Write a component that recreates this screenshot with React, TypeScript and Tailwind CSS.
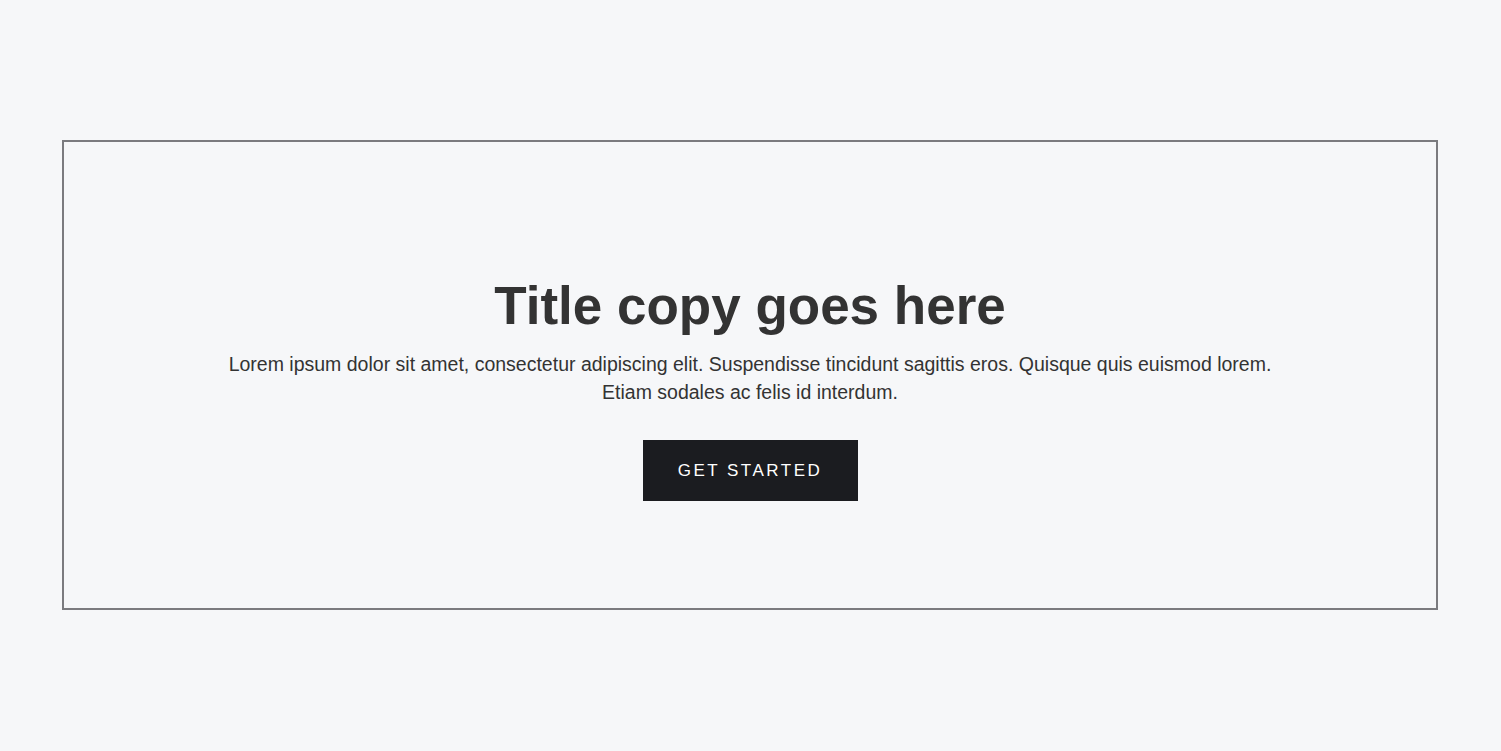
export default function App() {
  return (
    <div
      className="min-h-screen bg-[#f6f7f9] py-[140px] pl-[62px] pr-[63px]"
      style={{ fontFamily: '"Liberation Sans", Arial, sans-serif' }}
    >
      <section className="flex h-[470px] flex-col items-center border-2 border-[#7b7b7f] pt-[130px] text-center text-[#333333]">
        <h1 className="text-[53px] font-bold leading-[67px]">Title copy goes here</h1>
        <p className="mt-[11px] max-w-[1060px] text-[19.5px] leading-[28px]">
          Lorem ipsum dolor sit amet, consectetur adipiscing elit. Suspendisse tincidunt sagittis eros. Quisque quis
          euismod lorem.
          <br />
          Etiam sodales ac felis id interdum.
        </p>
        <button className="mt-[34px] h-[61px] w-[215px] bg-[#1b1c20] text-[17px] tracking-[2.5px] text-white">
          GET STARTED
        </button>
      </section>
    </div>
  );
}
